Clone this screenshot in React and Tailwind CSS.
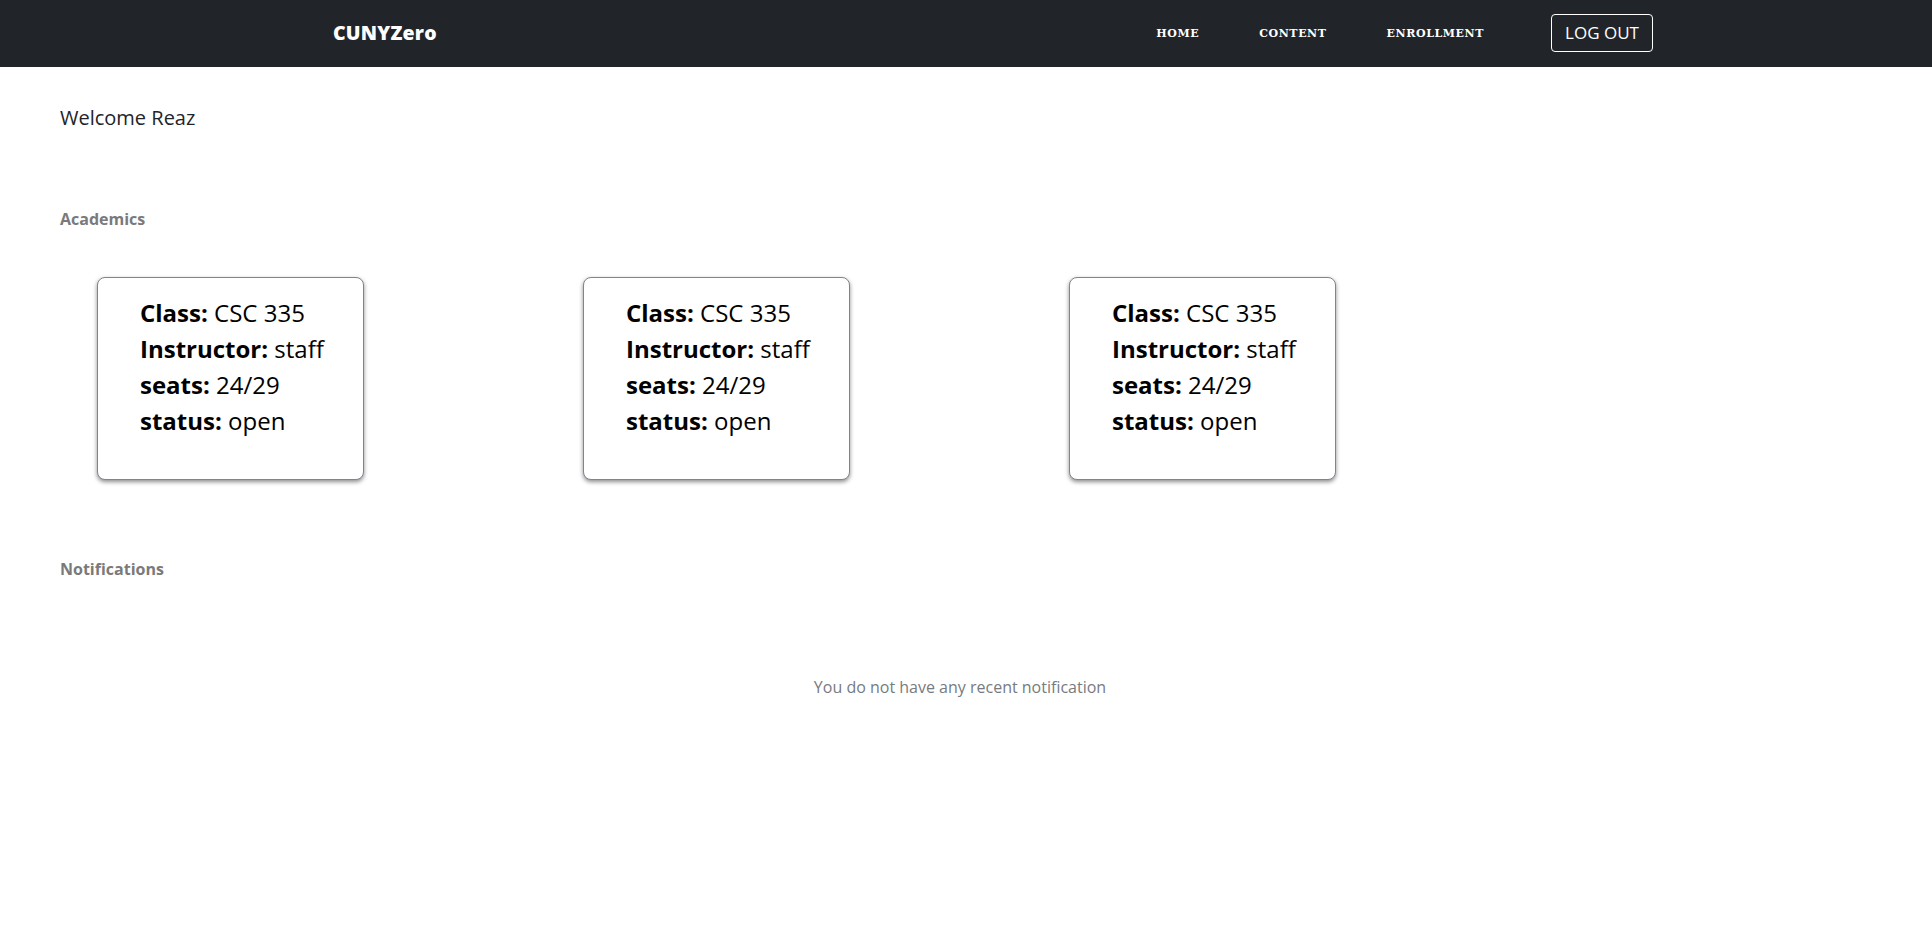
import React from "react";

const navLinks = ["HOME", "CONTENT", "ENROLLMENT"];

const classes = [
  { name: "CSC 335", instructor: "staff", seats: "24/29", status: "open" },
  { name: "CSC 335", instructor: "staff", seats: "24/29", status: "open" },
  { name: "CSC 335", instructor: "staff", seats: "24/29", status: "open" },
];

function ClassCard({ item }) {
  return (
    <div className="h-[203px] w-[267px] rounded-lg border border-[#7d8591] bg-white pl-[42px] pt-[17px] text-[24px] leading-[36px] text-black shadow-[0_2px_4px_rgba(0,0,0,0.45)]">
      <div>
        <span className="font-bold">Class:</span> {item.name}
      </div>
      <div>
        <span className="font-bold">Instructor:</span> {item.instructor}
      </div>
      <div>
        <span className="font-bold">seats:</span> {item.seats}
      </div>
      <div>
        <span className="font-bold">status:</span> {item.status}
      </div>
    </div>
  );
}

export default function App() {
  return (
    <div className="min-h-[940px] bg-white font-['Open_Sans',sans-serif]">
      <nav className="flex h-[67px] items-center bg-[#212529] pb-[1px]">
        <div className="ml-[333px] text-[19.5px] font-extrabold tracking-[0.2px] text-white">CUNYZero</div>
        <div className="ml-auto mr-[279px] flex items-center">
          <div className="mt-[2px] flex gap-[60px]">
            {navLinks.map((l) => (
              <a
                key={l}
                className="font-['DejaVu_Serif',serif] text-[11px] font-bold tracking-[0.6px] text-white"
              >
                {l}
              </a>
            ))}
          </div>
          <button className="ml-[67px] h-[38px] w-[102px] rounded border border-white text-[17px] text-white">
            LOG OUT
          </button>
        </div>
      </nav>

      <main className="pl-[60px]">
        <h1 className="mt-[36px] text-[20px] leading-[30px] text-[#212529]">Welcome Reaz</h1>

        <h2 className="mt-[74px] text-[16px] font-bold leading-[24px] text-[#7a7a7a]">Academics</h2>
        <div className="mt-[46px] flex gap-[219px] pl-[37px]">
          {classes.map((c, i) => (
            <ClassCard key={i} item={c} />
          ))}
        </div>

        <h2 className="mt-[77px] text-[16px] font-bold leading-[24px] text-[#7a7a7a]">Notifications</h2>
        <p className="mt-[94px] pr-[72px] text-center text-[16px] leading-[24px] text-[#777b80]">
          You do not have any recent notification
        </p>
      </main>
    </div>
  );
}
